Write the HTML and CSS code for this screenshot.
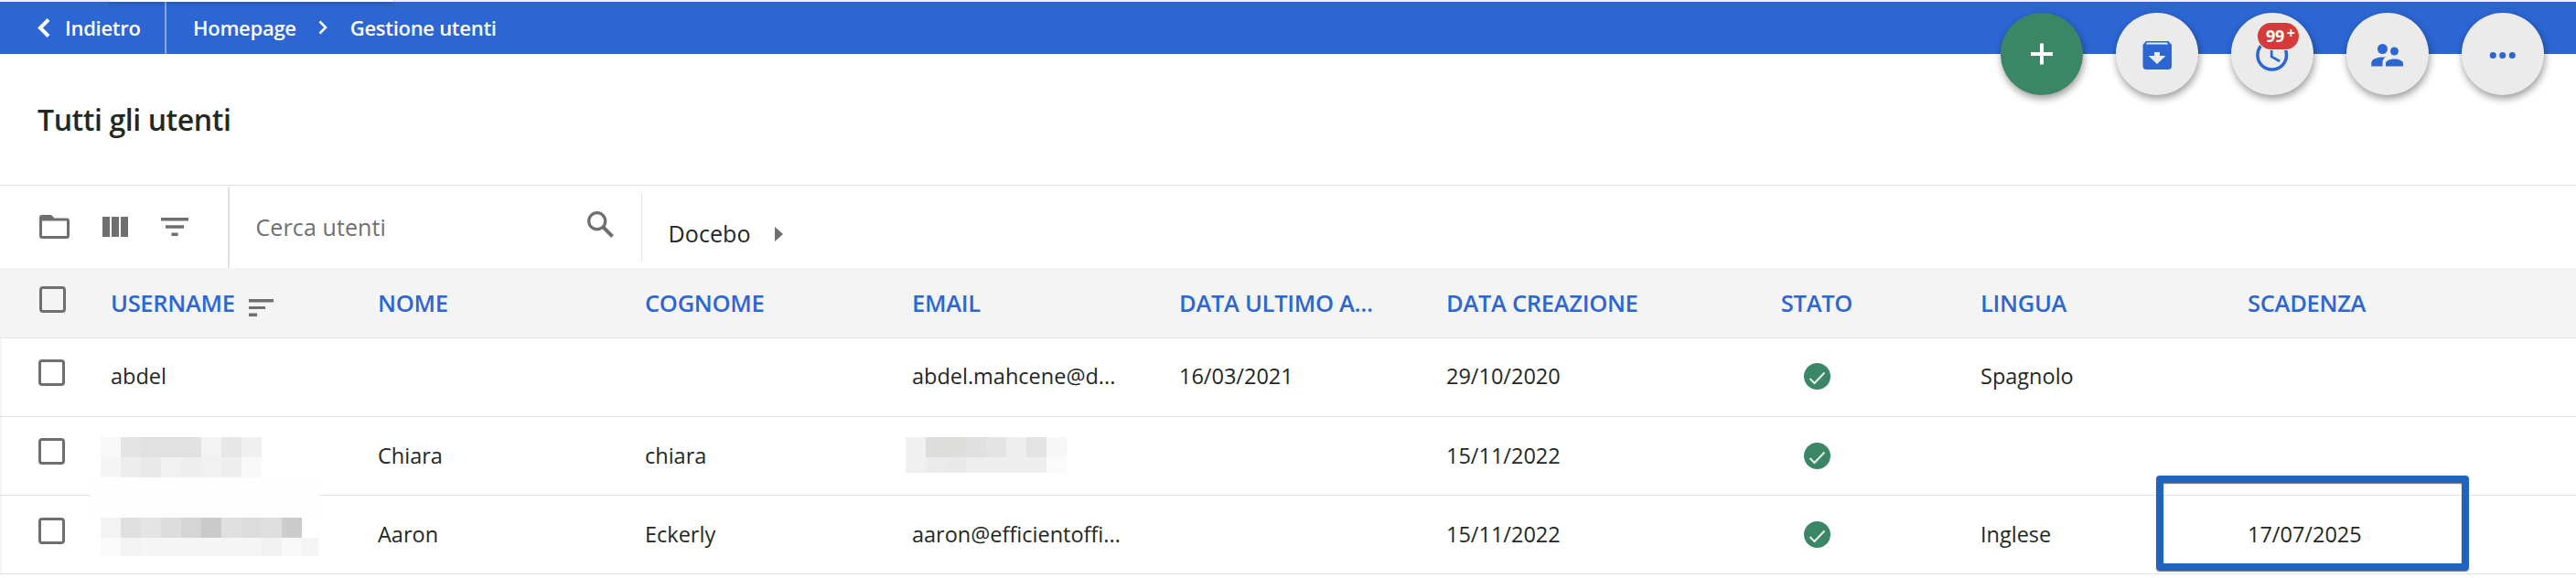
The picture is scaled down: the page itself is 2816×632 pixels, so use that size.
FILE: index.html
```
<!DOCTYPE html>
<html lang="it">
<head>
<meta charset="utf-8">
<title>Gestione utenti</title>
<link rel="stylesheet" href="styles.css">
</head>
<body>
<header class="topbar">
  <a class="back"><svg class="back-icon" width="14" height="21" viewBox="0 0 14 21"><path d="M12 1.500 3 10.500l9 9" /></svg><span>Indietro</span></a>
  <nav class="crumbs">
    <a>Homepage</a>
    <svg class="crumb-sep" width="10" height="16" viewBox="0 0 10 16"><path d="M1.500 1.500 8 8l-6.500 6.500"/></svg>
    <a>Gestione utenti</a>
  </nav>
  <div class="tab-shadow"></div>
  <div class="actions">
    <button class="fab fab-add"><svg width="96" height="90" viewBox="0 0 96 90"><path class="plus" d="M48 33.500v23M36 45h24"/></svg></button>
    <button class="fab"><svg width="96" height="90" viewBox="0 0 96 90"><path fill-rule="evenodd" d="M36 31h24.500l3.500 4v23a4 4 0 0 1-4 4h-23.500a4 4 0 0 1-4-4V35zM37 32.500l-1.200 2h24.400l-1.200-2zM45 43v4h-6.500l9.500 9 9.500-9h-6.500v-4z"/></svg></button>
    <button class="fab"><svg width="96" height="90" viewBox="0 0 96 90"><circle class="clock" cx="47.700" cy="46.300" r="15.800"/><path class="hands" d="M47.200 38v10l9 5"/></svg><span class="badge">99<sup>+</sup></span></button>
    <button class="fab"><svg width="96" height="90" viewBox="0 0 96 90"><circle cx="42.500" cy="39.500" r="5.500"/><circle cx="55.500" cy="42" r="4.500"/><path d="M30.300 58.500v-3.700c0-4 6-6.300 12-6.300h3.500c-2.500 1.500-3.300 3.500-3.300 6v4zM46 58.500v-3c0-3.500 5-5 9.500-5s9.500 1.500 9.500 5v3z"/></svg></button>
    <button class="fab"><svg width="96" height="90" viewBox="0 0 96 90"><circle cx="37.300" cy="46.500" r="3.500"/><circle cx="47.700" cy="46.500" r="3.500"/><circle cx="58.300" cy="46.500" r="3.500"/></svg></button>
  </div>
</header>
<main>
  <h1 class="title">Tutti gli utenti</h1>
  <section class="toolbar">
    <div class="tools">
      <svg width="33" height="26" viewBox="0 0 33 26"><path fill-rule="evenodd" d="M3 0h10l3.500 3.500H30a3 3 0 0 1 3 3V23a3 3 0 0 1-3 3H3a3 3 0 0 1-3-3V3a3 3 0 0 1 3-3zM3 6.500V23h27V6.500z"/></svg>
      <svg width="28" height="22" viewBox="0 0 28 22"><path d="M0 0h8v22H0zM10 0h8v22h-8zM20 0h8v22h-8z"/></svg>
      <svg width="30" height="20" viewBox="0 0 30 20"><path d="M0 0h30v3.500H0zM5 8.300h20v3.500H5zM11.500 16.500h7V20h-7z"/></svg>
    </div>
    <div class="search"><span class="placeholder">Cerca utenti</span>
      <svg width="29" height="29" viewBox="0 0 29 29"><circle class="lens" cx="10.700" cy="10.700" r="9"/><path class="handle" d="M17.500 17.500l10 10"/></svg>
    </div>
    <div class="branch"><span>Docebo</span><svg width="9" height="16" viewBox="0 0 9 16"><path d="M0 0l9 8-9 8z"/></svg></div>
  </section>
  <div class="table">
    <div class="row head">
      <div class="check"><i class="box"></i></div>
      <div class="cell"><span>USERNAME</span><svg class="sort" width="27" height="19" viewBox="0 0 27 19"><path d="M0 0h27v3.500H0zM0 8h18v3H0zM0 15.500h9V19H0z"/></svg></div>
      <div class="cell">NOME</div><div class="cell">COGNOME</div><div class="cell">EMAIL</div>
      <div class="cell">DATA ULTIMO A...</div><div class="cell">DATA CREAZIONE</div><div class="cell mid">STATO</div>
      <div class="cell">LINGUA</div><div class="cell">SCADENZA</div>
    </div>
    <div class="row first">
      <div class="check"><i class="box"></i></div>
      <div class="cell">abdel</div><div class="cell"></div><div class="cell"></div><div class="cell">abdel.mahcene@d...</div>
      <div class="cell">16/03/2021</div><div class="cell">29/10/2020</div>
      <div class="cell mid"><svg width="29" height="29" viewBox="0 0 29 29"><circle class="ok" cx="14.500" cy="14.500" r="14.500"/><path class="tick" d="M6.500 17l5 5L22.500 10.500"/></svg></div>
      <div class="cell">Spagnolo</div><div class="cell"></div>
    </div>
    <div class="row">
      <div class="check"><i class="box"></i></div>
      <div class="cell"><svg class="mosaic user-a" width="176" height="44" viewBox="0 0 176 44" shape-rendering="crispEdges"><path fill="#f8f8f8" d="M0 0h22v22H0z"/><path fill="#e3e3e3" d="M22 0h22v22H22z"/><path fill="#e1e1e1" d="M44 0h66v22H44z"/><path fill="#f3f3f3" d="M110 0h22v22h-22z"/><path fill="#e7e7e7" d="M132 0h22v22h-22z"/><path fill="#f0f0f0" d="M154 0h22v22h-22z"/><path fill="#f5f5f5" d="M0 22h22v22H0z"/><path fill="#ededed" d="M22 22h22v22H22z"/><path fill="#e8e8e8" d="M44 22h22v22H44z"/><path fill="#f1f1f1" d="M66 22h22v22H66z"/><path fill="#eeeeee" d="M88 22h22v22H88z"/><path fill="#f1f1f1" d="M110 22h22v22h-22z"/><path fill="#eeeeee" d="M132 22h22v22h-22z"/><path fill="#f9f9f9" d="M154 22h22v22h-22z"/></svg></div>
      <div class="cell">Chiara</div><div class="cell">chiara</div>
      <div class="cell"><svg class="mosaic mail-a" width="176" height="39" viewBox="0 0 176 39" shape-rendering="crispEdges"><path fill="#f0f0f0" d="M0 0h22v39H0z"/><path fill="#dddddc" d="M22 0h44v22H22z"/><path fill="#e0e0e0" d="M66 0h22v22H66z"/><path fill="#e4e4e4" d="M88 0h22v22H88z"/><path fill="#eeeeee" d="M110 0h22v22h-22z"/><path fill="#e3e3e1" d="M132 0h22v22h-22z"/><path fill="#f7f7f7" d="M154 0h22v22h-22z"/><path fill="#ebebeb" d="M22 22h22v17H22z"/><path fill="#e9e9e9" d="M44 22h22v17H44z"/><path fill="#eeeeee" d="M66 22h88v17H66z"/><path fill="#fafafa" d="M154 22h22v17h-22z"/></svg></div>
      <div class="cell"></div><div class="cell">15/11/2022</div>
      <div class="cell mid"><svg width="29" height="29" viewBox="0 0 29 29"><circle class="ok" cx="14.500" cy="14.500" r="14.500"/><path class="tick" d="M6.500 17l5 5L22.500 10.500"/></svg></div>
      <div class="cell"></div><div class="cell"></div>
    </div>
    <div class="row last">
      <div class="check"><i class="box"></i></div>
      <div class="cell"><svg class="mosaic user-b" width="251" height="86" viewBox="0 0 251 86" shape-rendering="crispEdges"><path fill="#fefefe" d="M0 0h251v44H0z"/><path fill="#f3f3f3" d="M12 44h22v22H12z"/><path fill="#e0e0e0" d="M34 44h22v22H34z"/><path fill="#e4e4e4" d="M56 44h22v22H56z"/><path fill="#dddddd" d="M78 44h22v22H78z"/><path fill="#d5d5d5" d="M100 44h22v22h-22z"/><path fill="#cacaca" d="M122 44h22v22h-22z"/><path fill="#e0e0de" d="M144 44h22v22h-22z"/><path fill="#dcdcdc" d="M166 44h22v22h-22z"/><path fill="#dedede" d="M188 44h22v22h-22z"/><path fill="#cccccc" d="M210 44h22v22h-22z"/><path fill="#fafafa" d="M12 66h22v20H12z"/><path fill="#f3f3f3" d="M34 66h22v20H34z"/><path fill="#f5f5f5" d="M56 66h132v20H56z"/><path fill="#f1f1f1" d="M188 66h22v20h-22z"/><path fill="#f8f8f8" d="M210 66h22v20h-22z"/><path fill="#f5f5f5" d="M232 66h19v20h-19z"/></svg></div>
      <div class="cell">Aaron</div><div class="cell">Eckerly</div><div class="cell">aaron@efficientoffi...</div>
      <div class="cell"></div><div class="cell">15/11/2022</div>
      <div class="cell mid"><svg width="29" height="29" viewBox="0 0 29 29"><circle class="ok" cx="14.500" cy="14.500" r="14.500"/><path class="tick" d="M6.500 17l5 5L22.500 10.500"/></svg></div>
      <div class="cell">Inglese</div><div class="cell expiry">17/07/2025</div>
    </div>
  </div>
</main>
</body>
</html>
```
FILE: styles.css
```
*, *::after { box-sizing: border-box; }
body { margin: 0; background: #fff; color: #222822; font-family: "Open Sans", "Noto Sans", sans-serif; font-size: 23.5px; overflow: hidden; }
svg { display: block; flex: none; }
.topbar { position: relative; display: flex; height: 59px; border-top: 2px solid #f1f2f4; background: #2c66d3; color: #fff; font-size: 22px; font-weight: 600; letter-spacing: -.28px; line-height: 56px; }
.back { display: flex; align-items: center; gap: 16px; width: 182px; padding: 0 0 1px 41px; border-right: 2px solid #86a8e6; }
.back-icon path { fill: none; stroke: #fff; stroke-width: 4; }
.crumbs { display: flex; align-items: center; gap: 24.500px; padding: 0 0 1px 29px; }
.crumb-sep path { fill: none; stroke: #fff; stroke-width: 2.500; }
.tab-shadow { position: absolute; left: 120px; top: -2px; width: 310px; height: 2px; background: #fff; box-shadow: 0 1px 4px rgba(0, 0, 0, .35); }
.actions { position: absolute; right: 35px; top: 12px; display: flex; gap: 36px; }
.fab { position: relative; display: flex; align-items: center; justify-content: center; width: 90px; height: 90px; padding: 0; border: 0; border-radius: 50%; background: #ebebeb; box-shadow: 1px 4px 8px rgba(0, 0, 0, .4); fill: #2c66d3; }
.fab-add { background: #3b8667; }
.plus { stroke: #fff; stroke-width: 4; }
.clock { fill: none; stroke: #2c66d3; stroke-width: 3.500; }
.hands { fill: none; stroke: #2c66d3; stroke-width: 2.700; }
.badge { position: absolute; left: 29px; top: 11px; width: 45px; height: 29px; padding-left: 9px; border-radius: 15px; background: #d43b3b; box-shadow: 0 0 0 1px #ebebeb; color: #fff; font: 700 18px/29px "Open Sans", sans-serif; letter-spacing: -.4px; text-align: left; white-space: nowrap; }
.badge sup { display: inline-block; margin-left: 3px; font-size: 16px; font-weight: 700; line-height: 14px; vertical-align: 4px; }
.title { margin: 0; height: 143px; font-size: 32px; font-weight: 600; letter-spacing: -.42px; line-height: 144px; padding-left: 41px; }
.toolbar { display: flex; height: 91px; border-top: 1px solid #e1e1e1; fill: #6f6f6f; font-size: 25px; }
.tools { display: flex; align-items: center; width: 251px; margin-top: 1px; padding: 0 0 1px 43px; gap: 36px; border-right: 2px solid #e1e1e1; }
.search { display: flex; justify-content: space-between; width: 451px; height: 76px; margin-top: 7px; padding: 0 30px 0 28.500px; border-right: 1px solid #e4e4e4; color: #6f6f6f; letter-spacing: .1px; line-height: 76px; }
.search svg { margin-top: 21px; }
.lens { fill: none; stroke: #6f6f6f; stroke-width: 3.300; }
.handle { stroke: #6f6f6f; stroke-width: 4; }
.branch { display: flex; align-items: center; gap: 26px; padding: 16px 0 0 28.500px; letter-spacing: .1px; }
.branch span { padding-bottom: 2px; }
.table { box-shadow: inset 3px 0 3px -2px rgba(0, 0, 0, .08); }
.row { display: grid; grid-template-columns: 88px repeat(9, 292px); height: 86px; border-bottom: 1px solid #e1e1e1; }
.head { height: 77px; background: #f4f4f4; color: #2c66d3; font-size: 25.500px; font-weight: 600; letter-spacing: -.3px; }
.check { padding: 23px 0 0 42px; }
.head .check { padding: 20px 0 0 43px; }
.last .check { padding-top: 24px; }
.box { display: block; width: 29px; height: 29px; border: 3px solid #6f6f6f; border-radius: 4px; }
.cell { position: relative; display: flex; align-items: center; padding: 0 33px 1px; white-space: nowrap; line-height: 34px; }
.first .cell { padding-bottom: 3px; }
.head .cell { padding-bottom: 0; }
.row .mid { justify-content: center; padding-bottom: 0; }
.first .mid { padding-bottom: 2px; }
.sort { margin: 11px 0 0 15px; fill: #6f6f6f; }
.ok { fill: #3b8667; }
.tick { fill: none; stroke: #e8efe9; stroke-width: 2; }
.mosaic { position: absolute; }
.user-a { left: 22px; top: 22px; }
.user-b { left: 10px; top: -20px; }
.mail-a { left: 26px; top: 22px; }
.expiry::after { content: ""; position: absolute; left: -67px; top: -22px; width: 342px; height: 104px; border: 8px solid #2063bf; border-radius: 4px; box-shadow: 0 1px 1px #777, inset 0 1px 1px #777; }
```
